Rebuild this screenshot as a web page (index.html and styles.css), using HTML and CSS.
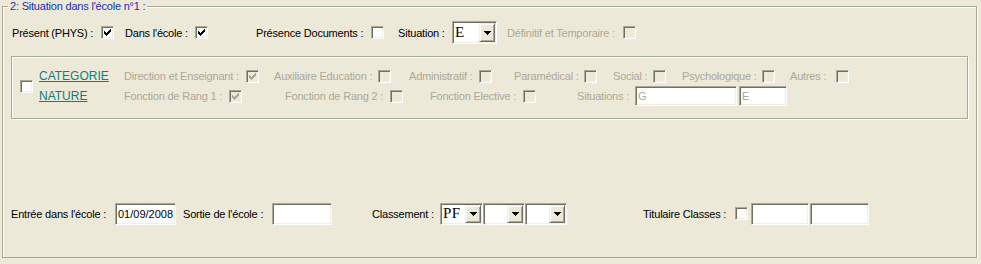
FILE: index.html
```html
<!DOCTYPE html>
<html lang="fr">
<head>
    <meta charset="UTF-8">
    <title>Situation dans l'école</title>
    <link rel="stylesheet" href="styles.css">
</head>
<body>
    <div class="group">
        <span class="legend">2: Situation dans l'école n°1 :</span>

        <!-- Top row -->
        <div class="row row-top">
            <div class="field f-present">
                <span>Présent (PHYS) :</span>
                <span class="cb"><svg width="7" height="7" viewBox="0 0 7 7"><path d="M6 0h1v1H6zM5 1h2v1H5zM0 2h1v1H0zM4 2h3v1H4zM0 3h2v1H0zM3 3h3v1H3zM0 4h5v1H0zM1 5h3v1H1zM2 6h1v1H2z"/></svg></span>
            </div>
            <div class="field f-ecole">
                <span>Dans l'école :</span>
                <span class="cb"><svg width="7" height="7" viewBox="0 0 7 7"><path d="M6 0h1v1H6zM5 1h2v1H5zM0 2h1v1H0zM4 2h3v1H4zM0 3h2v1H0zM3 3h3v1H3zM0 4h5v1H0zM1 5h3v1H1zM2 6h1v1H2z"/></svg></span>
            </div>
            <div class="field f-docs">
                <span>Présence Documents :</span>
                <span class="cb"></span>
            </div>
            <div class="field f-situation">
                <span>Situation :</span>
                <span class="select sel-situation"><span class="val">E</span><span class="btn"><svg width="7" height="4" viewBox="0 0 7 4"><path d="M0 0h7v1H0zM1 1h5v1H1zM2 2h3v1H2zM3 3h1v1H3z"/></svg></span></span>
            </div>
            <div class="field f-definitif off">
                <span>Définitif et Temporaire :</span>
                <span class="cb off"></span>
            </div>
        </div>

        <!-- Categorie / Nature -->
        <div class="inner">
            <span class="cb"></span>
            <div class="cats">
                <div class="row row-a">
                    <a class="link" href="#">CATEGORIE</a>
                    <div class="field off f-direction">
                        <span>Direction et Enseignant :</span>
                        <span class="cb off"><svg width="7" height="7" viewBox="0 0 7 7"><path d="M6 0h1v1H6zM5 1h2v1H5zM0 2h1v1H0zM4 2h3v1H4zM0 3h2v1H0zM3 3h3v1H3zM0 4h5v1H0zM1 5h3v1H1zM2 6h1v1H2z"/></svg></span>
                    </div>
                    <div class="field off f-auxiliaire">
                        <span>Auxiliaire Education :</span>
                        <span class="cb off"></span>
                    </div>
                    <div class="field off f-admin">
                        <span>Administratif :</span>
                        <span class="cb off"></span>
                    </div>
                    <div class="field off f-para">
                        <span>Paramédical :</span>
                        <span class="cb off"></span>
                    </div>
                    <div class="field off f-social">
                        <span>Social :</span>
                        <span class="cb off"></span>
                    </div>
                    <div class="field off f-psycho">
                        <span>Psychologique :</span>
                        <span class="cb off"></span>
                    </div>
                    <div class="field off f-autres">
                        <span>Autres :</span>
                        <span class="cb off"></span>
                    </div>
                </div>
                <div class="row row-b">
                    <a class="link" href="#">NATURE</a>
                    <div class="field off f-rang1">
                        <span>Fonction de Rang 1 :</span>
                        <span class="cb off"><svg width="7" height="7" viewBox="0 0 7 7"><path d="M6 0h1v1H6zM5 1h2v1H5zM0 2h1v1H0zM4 2h3v1H4zM0 3h2v1H0zM3 3h3v1H3zM0 4h5v1H0zM1 5h3v1H1zM2 6h1v1H2z"/></svg></span>
                    </div>
                    <div class="field off f-rang2">
                        <span>Fonction de Rang 2 :</span>
                        <span class="cb off"></span>
                    </div>
                    <div class="field off f-elective">
                        <span>Fonction Elective :</span>
                        <span class="cb off"></span>
                    </div>
                    <div class="field off f-situations">
                        <span>Situations :</span>
                        <span class="ctrls">
                            <input class="txt off w-sit1" type="text" value="G" readonly>
                            <input class="txt off w-sit2" type="text" value="E" readonly>
                        </span>
                    </div>
                </div>
            </div>
        </div>

        <!-- Bottom row -->
        <div class="row row-bottom">
            <div class="field f-entree">
                <span>Entrée dans l'école :</span>
                <input class="txt w-entree" type="text" value="01/09/2008">
            </div>
            <div class="field f-sortie">
                <span>Sortie de l'école :</span>
                <input class="txt w-sortie" type="text" value="">
            </div>
            <div class="field f-classement">
                <span>Classement :</span>
                <span class="ctrls">
                    <span class="select sel-c1"><span class="val">PF</span><span class="btn"><svg width="7" height="4" viewBox="0 0 7 4"><path d="M0 0h7v1H0zM1 1h5v1H1zM2 2h3v1H2zM3 3h1v1H3z"/></svg></span></span>
                    <span class="select sel-c2"><span class="val"></span><span class="btn"><svg width="7" height="4" viewBox="0 0 7 4"><path d="M0 0h7v1H0zM1 1h5v1H1zM2 2h3v1H2zM3 3h1v1H3z"/></svg></span></span>
                    <span class="select sel-c2"><span class="val"></span><span class="btn"><svg width="7" height="4" viewBox="0 0 7 4"><path d="M0 0h7v1H0zM1 1h5v1H1zM2 2h3v1H2zM3 3h1v1H3z"/></svg></span></span>
                </span>
            </div>
            <div class="field f-titulaire">
                <span>Titulaire Classes :</span>
                <span class="ctrls">
                    <span class="cb"></span>
                    <input class="txt w-tit1" type="text" value="">
                    <input class="txt w-tit2" type="text" value="">
                </span>
            </div>
        </div>
    </div>
</body>
</html>
```

FILE: styles.css
```css
body {
    margin: 0;
    background-color: #ece9d8;
    font-family: "Liberation Sans", Arial, sans-serif;
    font-size: 11px;
    color: #000;
}
.group {
    position: relative;
    box-sizing: border-box;
    width: 975px;
    height: 252px;
    margin: 6px 0 0 2px;
    padding-top: 14px;
    border: 1px solid #aca899;
    box-shadow: inset 1px 1px 0 #fff, 1px 1px 0 #fff;
}
.legend {
    position: absolute;
    top: -7px;
    left: 5px;
    padding: 0 2px;
    line-height: 13px;
    background-color: #ece9d8;
    color: #1a2fb0;
    letter-spacing: -0.2px;
}
.row {
    display: flex;
    align-items: center;
}
.row-top {
    height: 23px;
    margin-left: 9px;
}
.row-bottom {
    height: 23px;
    margin: 83px 0 0 8px;
}
.field {
    display: flex;
    align-items: center;
    justify-content: space-between;
    flex: none;
    white-space: nowrap;
    letter-spacing: -0.2px;
}
.off {
    color: #aca899;
}
.ctrls {
    display: flex;
    align-items: center;
    letter-spacing: 0;
}

/* top row widths */
.f-present { width: 102px; }
.f-ecole { width: 83px; margin-left: 11px; }
.f-docs { width: 128px; margin-left: 48px; }
.f-situation { width: 99px; margin-left: 14px; }
.f-definitif { width: 129px; margin-left: 10px; }

/* inner box */
.inner {
    box-sizing: border-box;
    width: 957px;
    margin: 12px 0 0 8px;
    padding: 10px 0 12px 0;
    border: 1px solid #aca899;
    box-shadow: inset 1px 1px 0 #fff, 1px 1px 0 #fff;
    display: flex;
    align-items: center;
}
.inner > .cb {
    margin-left: 8px;
}
.cats {
    display: flex;
    flex-direction: column;
    gap: 1px;
    margin-left: 6px;
}
.row-a { height: 18px; }
.row-b { height: 20px; }
.link {
    width: 85px;
    flex: none;
    font-size: 12px;
    color: #0e7f7c;
    text-decoration: underline;
}
.f-direction { width: 135px; }
.f-auxiliaire { width: 117px; margin-left: 15px; }
.f-admin { width: 83px; margin-left: 18px; }
.f-para { width: 83px; margin-left: 22px; }
.f-social { width: 53px; margin-left: 16px; }
.f-psycho { width: 93px; margin-left: 16px; }
.f-autres { width: 59px; margin-left: 15px; }
.f-rang1 { width: 118px; }
.f-rang2 { width: 118px; margin-left: 43px; }
.f-elective { width: 106px; margin-left: 27px; }
.f-situations { width: 210px; margin-left: 41px; }

/* bottom row widths */
.f-entree { width: 165px; }
.f-sortie { width: 149px; margin-left: 7px; }
.f-classement { width: 195px; margin-left: 40px; }
.f-titulaire { width: 226px; margin-left: 76px; }

/* checkbox */
.cb {
    box-sizing: border-box;
    width: 13px;
    height: 13px;
    flex: none;
    border: 1px solid;
    border-color: #aca899 #fff #fff #aca899;
    box-shadow: inset 1px 1px 0 #716f64, inset -1px -1px 0 #f1efe2;
    background-color: #fff;
    color: #000;
}
.cb svg {
    display: block;
    margin: 2px 0 0 2px;
    fill: currentColor;
}
.cb.off {
    background-color: #ece9d8;
    color: #aca899;
}
.ctrls .cb {
    margin-right: 3px;
}

/* text input */
.txt {
    box-sizing: border-box;
    height: 22px;
    margin: 0;
    padding: 0 2px;
    border: 1px solid;
    border-color: #aca899 #fff #fff #aca899;
    box-shadow: inset 1px 1px 0 #716f64, inset -1px -1px 0 #f1efe2;
    background-color: #fff;
    font-family: "Liberation Sans", Arial, sans-serif;
    font-size: 11px;
    color: #000;
    outline: none;
}
.txt.off {
    height: 20px;
    color: #aca899;
}
.w-sit1 { width: 102px; margin-right: 2px; }
.w-sit2 { width: 48px; }
.w-entree { width: 61px; }
.w-sortie { width: 60px; }
.w-tit1 { width: 58px; margin-right: 1px; }
.w-tit2 { width: 59px; }

/* combo box */
.select {
    box-sizing: border-box;
    display: flex;
    height: 22px;
    padding: 1px;
    border: 1px solid;
    border-color: #aca899 #fff #fff #aca899;
    box-shadow: inset 1px 1px 0 #716f64, inset -1px -1px 0 #f1efe2;
    background-color: #fff;
}
.sel-situation { width: 45px; height: 23px; }
.sel-c1 { width: 43px; }
.sel-c2 { width: 42px; }
.val {
    flex: 1;
    display: flex;
    align-items: center;
    padding-left: 1px;
    font-family: "Liberation Serif", "Times New Roman", serif;
    font-size: 15px;
    letter-spacing: 0.5px;
}
.btn {
    box-sizing: border-box;
    width: 16px;
    display: flex;
    align-items: center;
    justify-content: center;
    border: 1px solid;
    border-color: #f1efe2 #716f64 #716f64 #f1efe2;
    box-shadow: inset 1px 1px 0 #fff, inset -1px -1px 0 #aca899;
    background-color: #ece9d8;
}
.btn svg {
    display: block;
    fill: #000;
}
```
